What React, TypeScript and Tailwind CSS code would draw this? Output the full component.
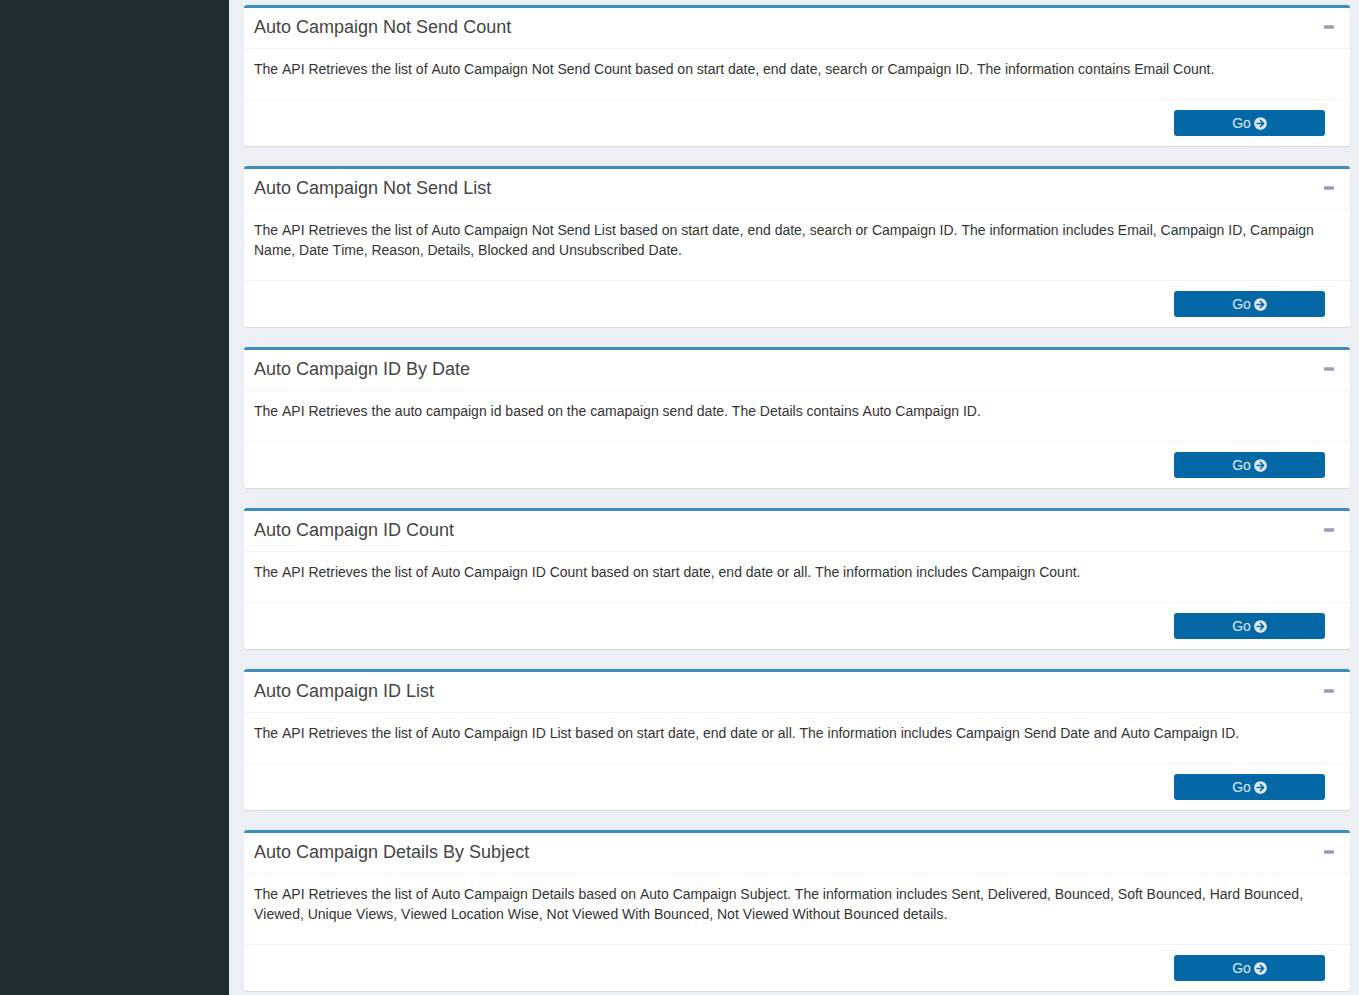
import { FaArrowCircleRight } from "react-icons/fa";

const cards = [
  {
    title: "Auto Campaign Not Send Count",
    text: "The API Retrieves the list of Auto Campaign Not Send Count based on start date, end date, search or Campaign ID. The information contains Email Count.",
  },
  {
    title: "Auto Campaign Not Send List",
    text: "The API Retrieves the list of Auto Campaign Not Send List based on start date, end date, search or Campaign ID. The information includes Email, Campaign ID, Campaign Name, Date Time, Reason, Details, Blocked and Unsubscribed Date.",
  },
  {
    title: "Auto Campaign ID By Date",
    text: "The API Retrieves the auto campaign id based on the camapaign send date. The Details contains Auto Campaign ID.",
  },
  {
    title: "Auto Campaign ID Count",
    text: "The API Retrieves the list of Auto Campaign ID Count based on start date, end date or all. The information includes Campaign Count.",
  },
  {
    title: "Auto Campaign ID List",
    text: "The API Retrieves the list of Auto Campaign ID List based on start date, end date or all. The information includes Campaign Send Date and Auto Campaign ID.",
  },
  {
    title: "Auto Campaign Details By Subject",
    text: "The API Retrieves the list of Auto Campaign Details based on Auto Campaign Subject. The information includes Sent, Delivered, Bounced, Soft Bounced, Hard Bounced, Viewed, Unique Views, Viewed Location Wise, Not Viewed With Bounced, Not Viewed Without Bounced details.",
  },
];

export default function App() {
  return (
    <div className="flex h-screen overflow-hidden bg-[#ecf0f5] font-['Liberation_Sans',Arial,sans-serif] text-sm text-[#333] [font-kerning:none]">
      <aside className="w-[229px] shrink-0 bg-[#222d32]" />
      <main className="flex min-w-0 flex-1 flex-col gap-5 pl-[15px] pr-[9px] pt-[5px]">
        {cards.map((c) => (
          <section
            key={c.title}
            className="shrink-0 rounded-[3px] border-t-[3px] border-[#3c8dbc] bg-white shadow-[0_1px_1px_rgba(0,0,0,0.1)]"
          >
            <header className="flex h-[41px] items-center justify-between border-b border-[#f4f4f4] pb-0.5 pl-2.5 pr-4">
              <h3 className="text-[18px] leading-none text-[#444]">{c.title}</h3>
              <svg width="10" height="4" viewBox="0 0 10 4" className="text-[#97a0b3]">
                <rect width="10" height="3.4" y="0.3" rx="0.8" fill="currentColor" />
              </svg>
            </header>
            <div className="p-2.5">
              <p className="mb-2.5 leading-5">{c.text}</p>
            </div>
            <footer className="flex justify-end border-t border-[#f4f4f4] py-2.5 pr-[25px]">
              <button className="flex h-[26px] w-[151px] items-center justify-center gap-[3px] rounded-[3px] bg-[#0568a6] text-[#dfe9f1]">
                Go
                <FaArrowCircleRight className="text-[13px]" />
              </button>
            </footer>
          </section>
        ))}
      </main>
    </div>
  );
}
